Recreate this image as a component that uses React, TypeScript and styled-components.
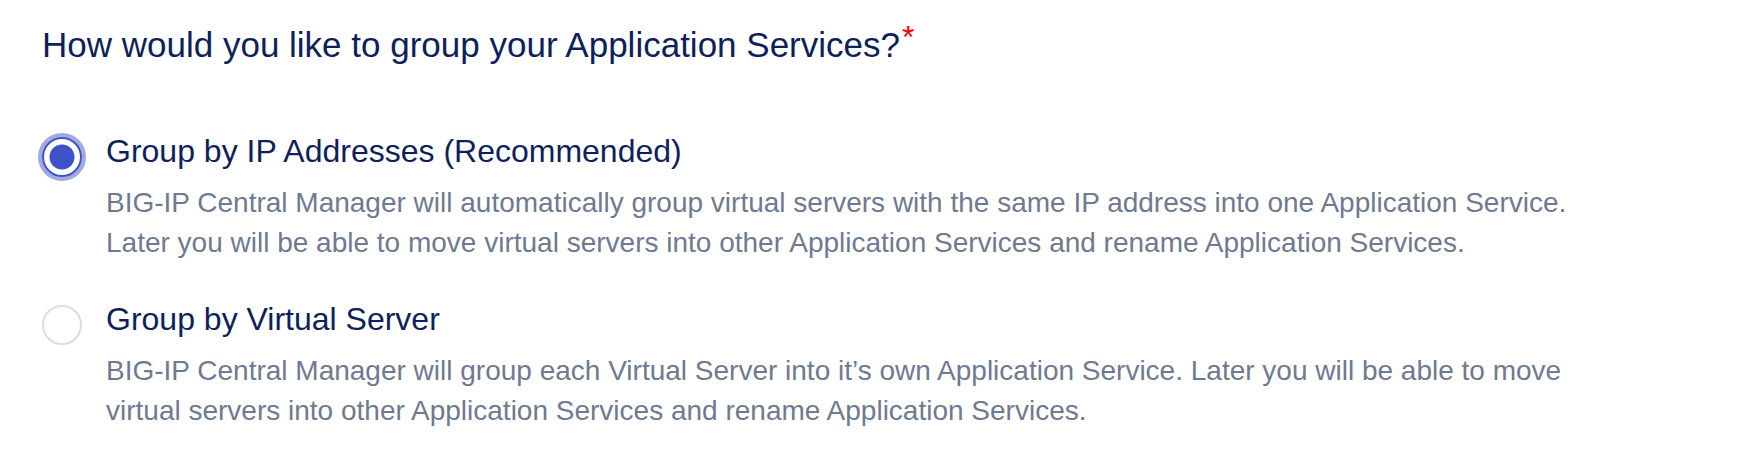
import React, { useState } from 'react';
import styled, { createGlobalStyle } from 'styled-components';

const GlobalStyle = createGlobalStyle`
  * { box-sizing: border-box; }
  body {
    margin: 0;
    background: #fff;
    font-family: "Liberation Sans", Arial, sans-serif;
  }
`;

const Group = styled.fieldset`
  margin: 0;
  border: 0;
  padding: 23px 160px 32px 42px;
  min-width: 0;
`;

const Question = styled.legend`
  float: left;
  width: 100%;
  padding: 0;
  margin-bottom: 56px;
  color: #0e1f5b;
  font-size: 35px;
  line-height: 44px;
`;

const Required = styled.span`
  margin-left: 2px;
  color: #ff0000;
  font-size: 32px;
  line-height: 0;
  vertical-align: 9px;
`;

const Options = styled.div`
  clear: both;
  display: flex;
  flex-direction: column;
  gap: 28px;
`;

const Option = styled.div`
  display: flex;
  align-items: flex-start;
  gap: 24px;
`;

const Radio = styled.input`
  appearance: none;
  flex: none;
  width: 40px;
  height: 40px;
  margin: 14px 0 0;
  border: 2px solid #dadde6;
  border-radius: 50%;
  background: #fff;
  &:checked {
    border-color: #3c52c6;
    background: radial-gradient(circle, #3c52c6 12px, #fff 13px);
    box-shadow: 0 0 0 4px #a0a9e2;
  }
`;

const Copy = styled.div`
  display: flex;
  flex: 1;
  flex-direction: column;
  align-items: flex-start;
  gap: 4px;
  min-width: 0;
`;

const Label = styled.label`
  color: #0e1f5b;
  font-size: 32px;
  line-height: 56px;
`;

const Description = styled.p`
  margin: 0;
  color: #6e7a91;
  font-size: 28px;
  line-height: 40px;
`;

const choices = [
  {
    id: 'ip',
    label: 'Group by IP Addresses (Recommended)',
    text: 'BIG-IP Central Manager will automatically group virtual servers with the same IP address into one Application Service. Later you will be able to move virtual servers into other Application Services and rename Application Services.',
  },
  {
    id: 'server',
    label: 'Group by Virtual Server',
    text: 'BIG-IP Central Manager will group each Virtual Server into it’s own Application Service. Later you will be able to move virtual servers into other Application Services and rename Application Services.',
  },
];

export default function App() {
  const [selected, setSelected] = useState('ip');
  return (
    <>
      <GlobalStyle />
      <Group>
        <Question>
          How would you like to group your Application Services?
          <Required>*</Required>
        </Question>
        <Options>
          {choices.map(({ id, label, text }) => (
            <Option key={id}>
              <Radio
                type="radio"
                name="grouping"
                id={id}
                checked={selected === id}
                onChange={() => setSelected(id)}
                aria-describedby={id + '-text'}
              />
              <Copy>
                <Label htmlFor={id}>{label}</Label>
                <Description id={id + '-text'}>{text}</Description>
              </Copy>
            </Option>
          ))}
        </Options>
      </Group>
    </>
  );
}
